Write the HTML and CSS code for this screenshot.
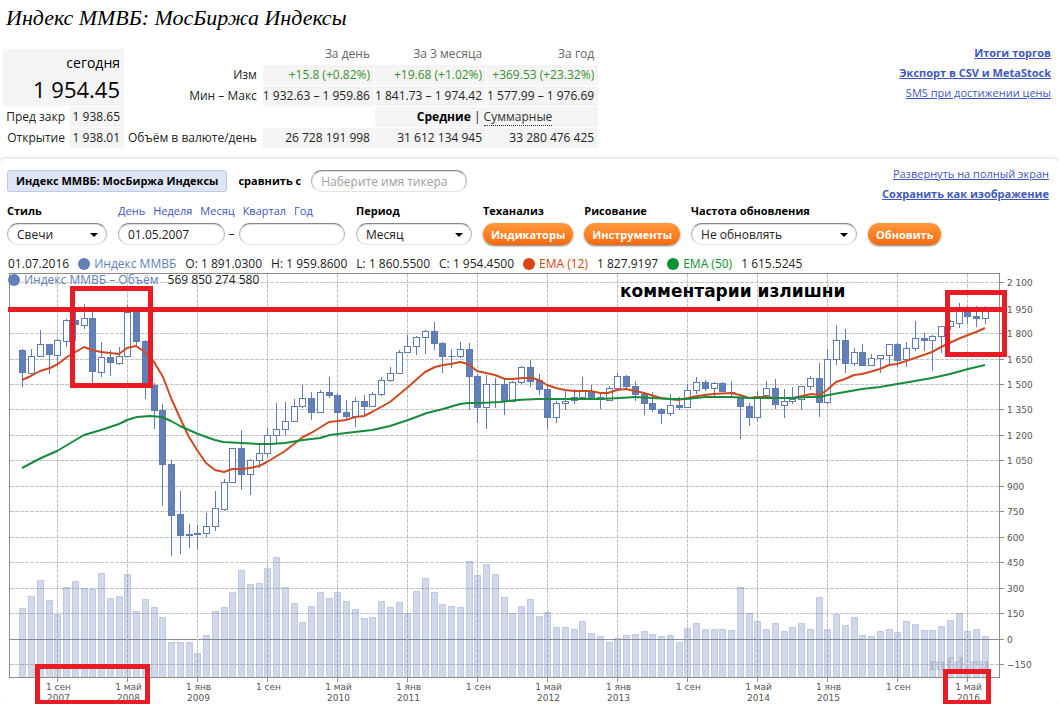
FILE: index.html
```html
<!DOCTYPE html>
<html lang="ru">
<head>
<meta charset="utf-8">
<title>Индекс ММВБ: МосБиржа Индексы</title>
<link rel="stylesheet" href="styles.css">
</head>
<body>
<h1 class="title">Индекс ММВБ: МосБиржа Индексы</h1>

<section class="summary">
  <table class="quote">
    <tr><td class="cell today" colspan="2"><span class="today-label">сегодня</span><span class="today-value">1 954.45</span></td></tr>
    <tr><th>Пред закр</th><td class="cell">1 938.65</td></tr>
    <tr><th>Открытие</th><td class="cell">1 938.01</td></tr>
  </table>
  <table class="stats">
    <tr class="periods"><td></td><th>За день</th><th>За 3 месяца</th><th>За год</th></tr>
    <tr><th>Изм</th><td class="cell up">+15.8 (+0.82%)</td><td class="cell up">+19.68 (+1.02%)</td><td class="cell up">+369.53 (+23.32%)</td></tr>
    <tr><th>Мин – Макс</th><td class="cell">1 932.63 – 1 959.86</td><td class="cell">1 841.73 – 1 974.42</td><td class="cell">1 577.99 – 1 976.69</td></tr>
    <tr><td></td><td></td><td class="cell modes" colspan="2"><b>Средние</b> | <a class="dotted" href="#">Суммарные</a></td></tr>
    <tr><th>Объём в валюте/день</th><td class="cell">26 728 191 998</td><td class="cell">31 612 134 945</td><td class="cell">33 280 476 425</td></tr>
  </table>
  <nav class="links">
    <a class="strong" href="#">Итоги торгов</a>
    <a class="strong" href="#">Экспорт в CSV и MetaStock</a>
    <a href="#">SMS при достижении цены</a>
  </nav>
</section>

<main class="panel">
  <div class="compare">
    <span class="tag">Индекс ММВБ: МосБиржа Индексы</span>
    <label class="compare-label" for="ticker">сравнить с</label>
    <input class="field ticker" id="ticker" type="text" placeholder="Наберите имя тикера">
    <nav class="links panel-links">
      <a href="#">Развернуть на полный экран</a>
      <a class="strong" href="#">Сохранить как изображение</a>
    </nav>
  </div>

  <form class="controls">
    <div class="group style-group">
      <label for="style">Стиль</label>
      <div class="select"><select class="field" id="style"><option>Свечи</option></select></div>
    </div>
    <div class="group range-group">
      <div class="ranges"><a href="#">День</a><a href="#">Неделя</a><a href="#">Месяц</a><a href="#">Квартал</a><a href="#">Год</a></div>
      <div class="dates"><input class="field" type="text" value="01.05.2007" aria-label="Начало периода"><span>–</span><input class="field" type="text" aria-label="Конец периода"></div>
    </div>
    <div class="group period-group">
      <label for="period">Период</label>
      <div class="select"><select class="field" id="period"><option>Месяц</option></select></div>
    </div>
    <div class="group">
      <span class="caption">Теханализ</span>
      <button class="button" type="button">Индикаторы</button>
    </div>
    <div class="group">
      <span class="caption">Рисование</span>
      <button class="button" type="button">Инструменты</button>
    </div>
    <div class="group refresh-group">
      <label for="refresh">Частота обновления</label>
      <div class="select"><select class="field" id="refresh"><option>Не обновлять</option></select></div>
    </div>
    <div class="group">
      <button class="button" type="button">Обновить</button>
    </div>
  </form>

  <div class="legend">
    <span>01.07.2016</span>
    <span class="series index">Индекс ММВБ</span>
    <span class="ohlc">O: 1 891.0300</span>
    <span class="ohlc">H: 1 959.8600</span>
    <span class="ohlc">L: 1 860.5500</span>
    <span class="ohlc">C: 1 954.4500</span>
    <span class="series ema12">EMA (12)</span>
    <span class="value">1 827.9197</span>
    <span class="series ema50">EMA (50)</span>
    <span class="value">1 615.5245</span>
  </div>

  <div class="chart-box">
    <div class="legend volume-legend">
      <span class="series index">Индекс ММВБ – Объём</span>
      <span class="value">569 850 274 580</span>
    </div>
    <svg class="chart" id="chart" viewBox="0 272 1059 432" role="img" aria-label="График индекса ММВБ"></svg>
  </div>
</main>
<script src="chart.js"></script>
</body>
</html>
```

FILE: styles.css
```css
* {
  box-sizing: border-box;
}

body {
  margin: 0;
  background: #fff;
  color: #222;
  font: 12px/20px "Open Sans", "Noto Sans", sans-serif;
  overflow: hidden;
}

a {
  color: #3f57c0;
}

.title {
  margin: 0;
  padding: 4px 6px 0;
  color: #000;
  font: italic 22px/28px "Liberation Serif", Georgia, serif;
}

.summary {
  display: flex;
  align-items: flex-start;
  padding: 11px 8px 0 2px;
  height: 127px;
}

table {
  border-collapse: separate;
  border-spacing: 1px;
}

th,
td {
  height: 20px;
  padding: 0 4px 0 0;
  line-height: 20px;
  font-weight: 400;
  text-align: right;
  white-space: nowrap;
}

.cell {
  background: #f4f4f4;
}

.quote {
  width: 123px;
  margin-top: 5px;
}

.today {
  height: 57px;
  color: #000;
}

.today-label,
.today-value {
  display: block;
}

.today-label {
  font-size: 14px;
  line-height: 22px;
}

.today-value {
  font-size: 22px;
  line-height: 30px;
}

.stats {
  margin-left: 2px;
}

.stats th:first-child {
  padding-right: 5px;
}

.periods th {
  color: #666;
}

.stats .up {
  color: #3c8f32;
}

.stats .modes {
  text-align: center;
}

.modes b {
  color: #000;
}

.dotted {
  color: #333;
  text-decoration: none;
  border-bottom: 1px dotted #333;
}

.links {
  display: flex;
  flex-direction: column;
  align-items: flex-end;
  margin-left: auto;
  font-size: 11px;
}

.strong {
  font-weight: 700;
}

.panel {
  border-radius: 5px;
  box-shadow: 0 -1px 4px #ddd;
  padding-top: 4px;
}

.compare {
  display: flex;
  align-items: center;
  height: 36px;
  padding: 0 10px 0 7px;
  color: #000;
}

.tag {
  height: 22px;
  padding: 0 8px;
  border: 1px solid #bccae8;
  border-radius: 3px;
  background: #dde5f7;
  font-size: 11px;
  font-weight: 700;
}

.compare-label {
  margin: 0 10px 0 11px;
  font-size: 11px;
  font-weight: 700;
}

.panel-links {
  padding-top: 5px;
}

.field {
  width: 100%;
  min-width: 0;
  height: 22px;
  padding: 0 9px;
  border: 1px solid #bbb;
  border-top-color: #888;
  border-bottom-color: #e4e4e4;
  border-radius: 11px;
  background: #fff;
  box-shadow: inset 0 1px 1px #ddd;
  color: #222;
  font: 12px "Open Sans", "Noto Sans", sans-serif;
  appearance: none;
}

.field::placeholder {
  color: #a0a0a0;
}

.ticker {
  width: 156px;
}

.controls {
  display: flex;
  align-items: flex-end;
  gap: 11px;
  padding: 2px 7px 0;
}

.group {
  display: flex;
  flex-direction: column;
  gap: 2px;
}

.group label,
.caption {
  color: #000;
  font-size: 11px;
  font-weight: 700;
}

.style-group {
  width: 100px;
}

.range-group {
  width: 227px;
}

.period-group {
  width: 116px;
}

.refresh-group {
  width: 166px;
}

.ranges {
  display: flex;
  gap: 8px;
  font-size: 11px;
}

.ranges a {
  text-decoration: none;
}

.dates {
  display: flex;
  gap: 4px;
  line-height: 22px;
}

.select {
  position: relative;
}

.select::after {
  content: "";
  position: absolute;
  top: 10px;
  right: 9px;
  border: 4px solid transparent;
  border-top-color: #000;
  border-bottom: 0;
  pointer-events: none;
}

.button {
  height: 22px;
  padding: 0 8px;
  border: 0;
  border-radius: 11px;
  background: linear-gradient(#ff9a3c, #fa6a10);
  box-shadow: 0 1px 2px #777;
  color: #fff;
  font: 700 11px "Open Sans", "Noto Sans", sans-serif;
}

.legend {
  display: flex;
  gap: 9px;
  padding: 9px 8px 0;
  white-space: nowrap;
}

.series::before {
  content: "";
  display: inline-block;
  width: 12px;
  height: 12px;
  margin-right: 4px;
  border-radius: 50%;
  background: currentColor;
  vertical-align: -2px;
}

.index {
  color: #637fb8;
}

.ema12 {
  color: #d8430f;
}

.ema50 {
  color: #07912f;
}

.chart-box {
  position: relative;
}

.volume-legend {
  position: absolute;
  top: -2px;
  left: 0;
  padding-top: 0;
}

.chart {
  display: block;
  width: 100%;
  margin-top: -2px;
}

.grid {
  stroke: #c4c4c4;
  stroke-dasharray: 4 1;
}

.axis {
  fill: none;
  stroke: #8c8c8c;
}

.bar {
  fill: #637fb8;
  fill-opacity: .3;
  stroke: #637fb8;
  stroke-opacity: .3;
}

.wick,
.candle {
  stroke: #5f7cb5;
}

.hollow {
  fill: #fff;
}

.solid {
  fill: #637fb8;
}

.average {
  fill: none;
  stroke-width: 2;
  stroke-linejoin: round;
}

.average-12 {
  stroke: #cf4a22;
}

.average-50 {
  stroke: #168c3c;
}

.tick {
  fill: #555;
  font: 9px "DejaVu Sans", sans-serif;
}

.middle {
  text-anchor: middle;
}

.watermark {
  fill: #8f93a8;
  fill-opacity: .4;
  font: 700 16px "DejaVu Serif", serif;
}

.mark {
  fill: none;
  stroke: #e81c24;
  stroke-width: 5;
}

.comment {
  fill: #000;
  font: 700 17px "DejaVu Sans", sans-serif;
}
```

FILE: chart.js
```js
const chart = document.getElementById("chart");
const NS = "http://www.w3.org/2000/svg";

function add(tag, cls, attrs, text) {
  const el = document.createElementNS(NS, tag);
  el.setAttribute("class", cls);
  for (const k in attrs) el.setAttribute(k, attrs[k]);
  if (text) el.textContent = text;
  chart.appendChild(el);
}

const monthX = i => Math.ceil(22 + 8.75 * i) + 0.5;

// Monthly candles: falling flag, high, body top, body bottom, low
const candles = [
[1,349,350,373,387],[0,349,356,373,376],[0,330,344,356,356],[1,344,344,355,374],[0,339,340,355,363],[0,319,320,341,347],[1,311,320,325,341],[0,304,318,325,329],[1,312,318,372,384],[0,342,357,372,377],
[1,350,357,363,376],[0,347,356,363,365],[0,305,312,356,356],[1,311,312,342,347],[1,340,341,384,399],[1,383,385,411,429],[1,404,410,465,506],[1,460,464,516,556],[1,491,514,536,554],[1,524,534,536,548],
[1,525,533,535,549],[0,513,526,533,537],[0,491,508,526,531],[0,479,482,509,511],[0,448,448,482,482],[1,430,448,475,490],[0,459,460,474,495],[0,445,453,460,468],[0,428,435,453,457],[0,403,429,435,444],
[0,402,421,429,435],[0,399,406,421,421],[0,385,398,406,408],[1,392,398,413,420],[0,390,392,412,412],[1,377,392,396,398],[1,393,395,413,437],[1,400,412,417,420],[0,397,401,416,427],[1,395,401,407,415],
[0,392,394,406,406],[0,377,380,394,396],[0,367,373,380,382],[0,350,352,373,373],[0,335,346,352,352],[0,336,337,346,355],[0,330,331,337,354],[1,322,331,344,350],[1,342,343,357,373],[1,349,356,357,368],
[0,342,349,356,358],[1,343,349,377,410],[1,374,376,408,423],[0,375,384,407,429],[1,378,384,385,408],[1,379,384,402,415],[0,381,382,401,401],[0,366,367,382,384],[1,360,367,382,387],[1,374,380,390,395],
[1,385,389,418,429],[0,401,403,417,423],[0,390,401,403,410],[0,389,397,400,404],[0,377,391,397,398],[1,385,391,399,399],[1,392,397,400,409],[0,386,388,400,400],[0,373,376,388,388],[1,375,376,387,388],
[1,381,386,395,401],[1,393,394,404,415],[1,392,403,410,412],[1,408,409,414,424],[0,394,405,413,416],[1,397,405,408,410],[0,384,390,407,407],[0,377,382,390,394],[1,380,382,389,391],[0,382,383,388,397],
[1,382,383,392,392],[1,381,392,393,397],[1,395,397,407,439],[1,403,406,418,426],[0,391,396,417,421],[0,381,388,395,397],[1,379,388,405,409],[0,389,401,405,418],[0,387,399,401,404],[0,386,386,399,410],
[0,376,378,386,390],[1,363,378,403,417],[0,349,359,402,404],[0,325,340,359,365],[1,329,340,364,373],[0,348,352,363,366],[1,344,352,366,366],[0,354,358,365,365],[0,355,355,358,373],[0,344,344,355,365],
[1,343,344,361,367],[0,342,348,359,367],[0,321,338,348,351],[1,333,338,341,351],[0,335,336,340,371],[0,326,326,336,353],[0,320,321,326,330],[0,303,310,323,328],[1,306,310,317,324],[1,306,316,319,327],
[0,306,310,318,324]];

// Top edge of each monthly volume bar
const volumes = [608,596,580,600,614,587,581,588,589,573,598,596,574,611,599,607,617,642,642,642,653,635,611,607,592,570,584,583,568,557,587,603,622,606,592,598,592,601,609,618,617,601,607,602,613,591,578,592,604,606,607,561,575,564,574,597,613,606,599,616,612,627,627,629,621,633,636,642,638,635,634,631,634,636,635,642,628,623,629,629,629,630,587,613,621,629,623,631,627,623,629,597,629,614,625,617,635,636,631,629,632,621,624,630,630,626,620,613,631,629,636];

const ema12 = "22,380 31,376 40,371 50,368 58,364 67,357 84,347 92,350 101,352 110,353 119,354 127,348 136,346 145,352 154,362 163,377 171,398 180,418 189,437 197,450 206,463 215,470 224,472 232,469 241,469 250,468 259,466 267,462 285,451 303,437 311,433 321,427 329,422 346,420 355,417 364,416 372,412 390,402 408,387 425,372 435,367 443,365 451,364 460,362 468,364 477,371 495,375 505,379 513,379 522,378 532,378 539,380 547,385 556,388 565,390 574,391 591,391 600,393 608,393 617,390 626,389 635,391 644,393 661,398 678,400 688,398 697,396 713,394 731,393 740,395 749,398 758,397 767,397 776,398 793,398 802,396 811,394 820,395 827,390 836,382 845,379 854,375 862,374 880,369 889,365 897,364 906,361 915,358 932,352 943,346 958,339 968,335 976,332 985,328";
const ema50 = "22,468 41,458 57,451 84,435 101,430 119,424 127,420 137,417 150,416 162,417 171,421 180,426 198,434 215,440 223,442 241,443 259,444 270,444 285,443 303,440 320,438 330,435 346,433 372,430 390,426 408,420 427,413 443,409 460,404 468,403 480,403 500,402 517,400 538,399 555,399 600,399 620,398 635,397 652,398 670,399 687,399 705,397 731,397 749,398 758,398 780,398 793,398 810,397 820,397 828,395 845,392 862,389 880,387 897,384 915,381 932,378 950,374 968,369 985,365";

const priceY = [282,309,333,359,384,409,435,460,486,511,537,562,588,613,639,664];
const prices = ["2 100","1 950","1 800","1 650","1 500","1 350","1 200","1 050","900","750","600","450","300","150","0","−150"];
const dates = [["сен","2007"],["май","2008"],["янв","2009"],["сен"],["май","2010"],["янв","2011"],["сен"],["май","2012"],["янв","2013"],["сен"],["май","2014"],["янв","2015"],["сен"],["май","2016"]];

add("text", "watermark", {x: 929, y: 670}, "mfd.ru");

priceY.forEach((y, i) => {
  const zero = prices[i] === "0";
  add("line", zero ? "axis" : "grid", {x1: 10, x2: 999, y1: y + 0.5, y2: y + 0.5});
  add("line", "axis", {x1: 1000, x2: 1004, y1: y + 0.5, y2: y + 0.5});
  add("text", "tick", {x: 1007, y: y + 4}, prices[i]);
});
dates.forEach((d, i) => {
  const x = 57.5 + 70 * i;
  add("line", "grid", {x1: x, x2: x, y1: 274, y2: 677});
  add("line", "axis", {x1: x, x2: x, y1: 678, y2: 682});
  add("text", "tick middle", {x: x + 1, y: 690}, "1 " + d[0]);
  if (d[1]) add("text", "tick middle", {x: x + 1, y: 701}, d[1]);
});

volumes.forEach((y, i) => {
  add("rect", "bar", {x: monthX(i) - 3, y: y + 0.5, width: 6, height: 677 - y});
});
add("rect", "axis", {x: 9.5, y: 273.5, width: 990, height: 404});

candles.forEach(([falling, high, top, bottom, low], i) => {
  const x = monthX(i);
  const y = top + 0.5;
  add("line", "wick", {x1: x, x2: x, y1: high, y2: low});
  if (bottom - top < 2) {
    add("line", "candle", {x1: x - 3, x2: x + 4, y1: y, y2: y});
  } else {
    add("rect", "candle " + (falling ? "solid" : "hollow"), {x: x - 3, y, width: 6, height: bottom - top - falling});
  }
});

add("polyline", "average average-12", {points: ema12});
add("polyline", "average average-50", {points: ema50});

add("line", "mark", {x1: 8, x2: 1004, y1: 309.5, y2: 309.5});
add("rect", "mark", {x: 72.5, y: 288.5, width: 78, height: 97});
add("rect", "mark", {x: 947.5, y: 292.5, width: 57, height: 62});
add("rect", "mark", {x: 37.5, y: 666.5, width: 110, height: 36});
add("rect", "mark", {x: 945.5, y: 671.5, width: 43, height: 31});
add("text", "comment", {x: 620, y: 297}, "комментарии излишни");
```
